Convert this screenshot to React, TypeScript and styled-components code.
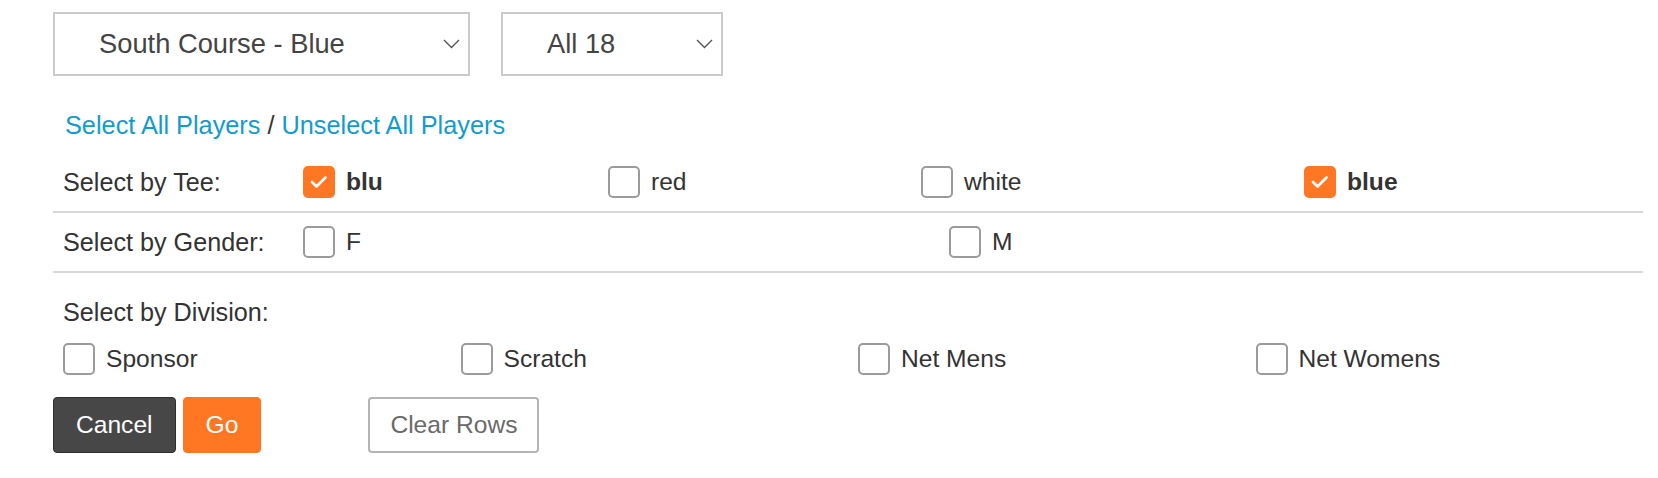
import styled, { createGlobalStyle } from 'styled-components';

const GlobalStyle = createGlobalStyle`
  html, body {
    margin: 0;
    padding: 0;
    background: #ffffff;
  }
  body {
    font-family: "Liberation Sans", Arial, sans-serif;
    color: #333333;
  }
`;

const Page = styled.div`
  width: 1590px;
  margin-left: 53px;
  padding-top: 12px;
`;

const SelectRow = styled.div`
  display: flex;
  gap: 31px;
`;

const SelectBox = styled.div<{ width: number }>`
  box-sizing: border-box;
  width: ${p => p.width}px;
  height: 64px;
  border: 2px solid #cacaca;
  display: flex;
  align-items: center;
  justify-content: space-between;
  padding: 0 8px 0 44px;
  font-size: 27.3px;
  color: #444444;
  cursor: pointer;
`;

const Chevron = () => (
  <svg width="17" height="10" viewBox="0 0 17 10" fill="none">
    <polyline points="1,1 8.5,8.5 16,1" stroke="#555" strokeWidth="1.4" />
  </svg>
);

const LinksLine = styled.div`
  margin-top: 32px;
  padding-left: 12px;
  font-size: 25.3px;
  line-height: 34px;
  color: #333333;
`;

const TextLink = styled.a`
  color: #149bcd;
  text-decoration: none;
  cursor: pointer;
`;

const FilterRow = styled.div<{ first?: boolean }>`
  display: grid;
  grid-template-columns: 250px 1fr;
  align-items: center;
  height: 58px;
  margin-top: ${p => (p.first ? '11px' : '0')};
  border-bottom: 2px solid #d8d8d8;
`;

const RowLabel = styled.div`
  padding-left: 10px;
  font-size: 25.2px;
`;

const Options = styled.div<{ columns: string }>`
  display: grid;
  grid-template-columns: ${p => p.columns};
  align-items: center;
`;

const OptionLabel = styled.label<{ checked?: boolean }>`
  display: flex;
  align-items: center;
  gap: 11px;
  font-size: 24.6px;
  font-weight: ${p => (p.checked ? 700 : 400)};
  color: #333333;
  cursor: pointer;
`;

const Box = styled.span<{ checked?: boolean }>`
  box-sizing: border-box;
  width: 32px;
  height: 32px;
  flex: none;
  border-radius: 5px;
  border: 2px solid ${p => (p.checked ? '#ff7722' : '#9b9b9b')};
  background: ${p => (p.checked ? '#ff7722' : '#ffffff')};
  display: flex;
  align-items: center;
  justify-content: center;
`;

const Checkbox = ({ label, checked }: { label: string; checked?: boolean }) => (
  <OptionLabel checked={checked}>
    <Box checked={checked}>
      {checked && (
        <svg width="28" height="28" viewBox="0 0 28 28" fill="none">
          <polyline points="7,14 11.5,18.5 20.5,9.5" stroke="#fff" strokeWidth="2.7" strokeLinecap="round" strokeLinejoin="round" />
        </svg>
      )}
    </Box>
    {label}
  </OptionLabel>
);

const DivisionBlock = styled.div`
  padding: 22px 0 0 10px;
`;

const DivisionTitle = styled.div`
  font-size: 25.2px;
  line-height: 34px;
`;

const DivisionGrid = styled.div`
  display: grid;
  grid-template-columns: repeat(4, 397.5px);
  align-items: center;
  height: 40px;
  margin-top: 10px;
`;

const Actions = styled.div`
  display: flex;
  align-items: center;
  margin-top: 18px;
`;

const Button = styled.button<{ variant: 'dark' | 'primary' | 'outline' }>`
  box-sizing: border-box;
  height: 56px;
  padding: 0 ${p => (p.variant === 'outline' ? '20px' : '22px')};
  border-radius: 4px;
  font-family: "Liberation Sans", Arial, sans-serif;
  font-size: 24.6px;
  cursor: pointer;
  background: ${p => (p.variant === 'dark' ? '#474747' : p.variant === 'primary' ? '#ff7722' : '#ffffff')};
  color: ${p => (p.variant === 'outline' ? '#6a6a6a' : '#ffffff')};
  border: ${p =>
    p.variant === 'dark' ? '1px solid #2e2e2e' : p.variant === 'primary' ? '1px solid #ff7722' : '2px solid #b4b4b4'};
  margin-right: ${p => (p.variant === 'dark' ? '7px' : '0')};
  margin-left: ${p => (p.variant === 'outline' ? '107px' : '0')};
`;

const tees = [
  { label: 'blu', checked: true },
  { label: 'red' },
  { label: 'white' },
  { label: 'blue', checked: true },
];

const divisions = ['Sponsor', 'Scratch', 'Net Mens', 'Net Womens'];

export default function App() {
  return (
    <>
      <GlobalStyle />
      <Page>
        <SelectRow>
          <SelectBox width={417}>
            South Course - Blue
            <Chevron />
          </SelectBox>
          <SelectBox width={222}>
            All 18
            <Chevron />
          </SelectBox>
        </SelectRow>

        <LinksLine>
          <TextLink>Select All Players</TextLink> / <TextLink>Unselect All Players</TextLink>
        </LinksLine>

        <FilterRow first>
          <RowLabel>Select by Tee:</RowLabel>
          <Options columns="305px 313px 383px 1fr">
            {tees.map(t => (
              <Checkbox key={t.label} label={t.label} checked={t.checked} />
            ))}
          </Options>
        </FilterRow>

        <FilterRow>
          <RowLabel>Select by Gender:</RowLabel>
          <Options columns="646px 1fr">
            <Checkbox label="F" />
            <Checkbox label="M" />
          </Options>
        </FilterRow>

        <DivisionBlock>
          <DivisionTitle>Select by Division:</DivisionTitle>
          <DivisionGrid>
            {divisions.map(d => (
              <Checkbox key={d} label={d} />
            ))}
          </DivisionGrid>
        </DivisionBlock>

        <Actions>
          <Button variant="dark">Cancel</Button>
          <Button variant="primary">Go</Button>
          <Button variant="outline">Clear Rows</Button>
        </Actions>
      </Page>
    </>
  );
}
